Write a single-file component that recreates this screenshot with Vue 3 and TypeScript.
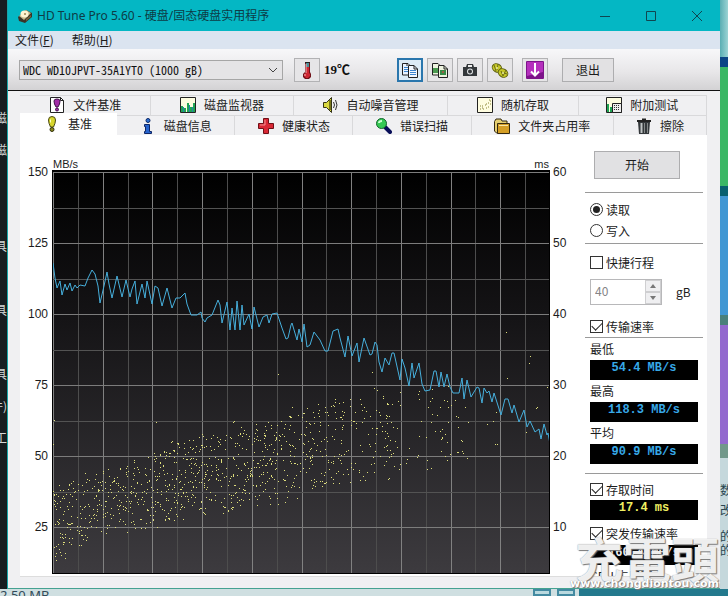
<script setup lang="ts">
import { ref } from 'vue'

type Point = [number, number]

interface Tab {
  label: string
  icon: string
}

const backTabs: Tab[] = [
  { label: '文件基准', icon: 'filebench' },
  { label: '磁盘监视器', icon: 'monitor' },
  { label: '自动噪音管理', icon: 'speaker' },
  { label: '随机存取', icon: 'random' },
  { label: '附加测试', icon: 'extra' },
]
const frontTabs: Tab[] = [
  { label: '基准', icon: 'bench' },
  { label: '磁盘信息', icon: 'info' },
  { label: '健康状态', icon: 'health' },
  { label: '错误扫描', icon: 'scan' },
  { label: '文件夹占用率', icon: 'folder' },
  { label: '擦除', icon: 'erase' },
]
const active = ref('基准')

const speedTicks = [150, 125, 100, 75, 50, 25]
const timeTicks = [60, 50, 40, 30, 20, 10]

const mode = ref('read')
const shortStroke = ref(false)
const showTransfer = ref(true)
const showAccess = ref(true)
const showBurst = ref(true)
const capacity = ref('40')

const speeds = [
  { label: '最低', value: '54.4 MB/s' },
  { label: '最高', value: '118.3 MB/s' },
  { label: '平均', value: '90.9 MB/s' },
]

// Transfer rate trace, in plot units (498 wide, 71 units per 25 MB/s).
const trace =
  '1,91 3,106 5,116 8,109 10,123 13,112 15,118 18,111 20,119 23,113 25,116 28,113 33,114 36,106 40,98 43,102 46,114 48,131 52,114 55,100 57,112 60,126 65,104 70,125 74,108 78,125 80,117 83,109 85,132 90,112 93,126 95,109 100,132 103,114 106,116 110,134 115,116 120,136 124,126 128,126 133,121 135,132 139,143 145,143 149,140 150,146 153,150 155,146 160,143 166,128 168,133 170,151 175,130 178,158 180,136 183,158 185,129 188,158 190,133 192,153 197,142 200,157 202,135 207,155 211,145 215,143 217,151 220,142 225,141 230,156 234,167 236,166 239,153 240,151 245,168 247,157 250,170 252,152 255,175 258,173 262,160 268,168 273,179 276,179 281,159 286,157 288,166 293,185 296,164 300,184 305,171 307,190 312,166 318,183 320,182 323,170 325,173 327,190 330,200 333,186 337,193 340,181 342,181 348,208 350,187 353,196 357,214 360,191 362,206 367,191 370,212 373,219 378,218 382,199 384,199 387,215 389,200 392,215 395,202 398,215 401,221 407,221 410,206 412,227 415,208 419,225 425,215 427,216 430,231 432,216 435,221 437,219 440,230 442,221 449,243 453,227 456,227 460,241 462,233 467,250 472,238 475,255 478,249 483,260 487,257 489,267 492,252 495,263 496,261 498,272'

// Upper and lower edge of the access time cloud.
const upper: Point[] = [[1, 308], [22, 300], [45, 294], [90, 280], [115, 266], [150, 258], [200, 250], [240, 234], [280, 220], [320, 210], [380, 214], [410, 220]]
const lower: Point[] = [[1, 399], [22, 380], [50, 368], [100, 360], [150, 348], [200, 342], [240, 332], [290, 318], [340, 304], [380, 294], [410, 288]]

function edge(points: Point[], x: number): number {
  for (let i = 1; i < points.length; i++) {
    const [x0, y0] = points[i - 1]
    const [x1, y1] = points[i]
    if (x <= x1) return y0 + ((y1 - y0) * (x - x0)) / (x1 - x0)
  }
  return points[points.length - 1][1]
}

const strays: Point[] = [
  [2, 248], [1, 272], [104, 250], [181, 250], [182, 249], [240, 235], [226, 202], [320, 200], [454, 160], [478, 184], [477, 191],
  [455, 206], [495, 215], [396, 214], [367, 219], [392, 228], [399, 233], [413, 235], [484, 236], [485, 235], [444, 240], [441, 249],
  [435, 252], [404, 244], [416, 250], [406, 255], [409, 268], [445, 272], [443, 272], [474, 260], [390, 265], [410, 269], [410, 279],
  [411, 281], [415, 286], [395, 288], [375, 297], [379, 296], [375, 288], [337, 306], [336, 307], [313, 308], [290, 247], [178, 265],
]

function cloud(): string {
  let seed = 20177
  const next = () => {
    seed = (seed * 16807) % 2147483647
    return seed / 2147483647
  }
  const dots: Point[] = [...strays]
  while (dots.length < 1080) {
    const x = 1 + Math.floor(next() * 408)
    const weight = x < 225 ? 1 : x < 290 ? 0.75 : x < 345 ? 0.42 : 0.18
    const centred = (next() + next()) / 2
    const even = next()
    if (next() > weight) continue
    const top = edge(upper, x)
    const bottom = edge(lower, x)
    dots.push([x, Math.round(top + (bottom - top) * (centred * 0.15 + even * 0.85))])
  }
  return dots.map(([x, y]) => `M${x},${y}h1v1h-1z`).join('')
}
const dots = cloud()

const columns = Array.from({ length: 21 }, (_, i) => ({ at: Math.round(i * 24.85) + 1, major: i % 2 === 0 }))
const rows = Array.from({ length: 11 }, (_, i) => ({ at: Math.round(i * 35.5), major: i % 2 === 0 }))

const leftDesk = ['磁', '磁', '', '', '具', '', '具', '', '具', '件)', '工']
</script>

<template>
  <div class="desktop">
    <aside class="desk-left">
      <span v-for="(t, i) in leftDesk" :key="i">{{ t }}</span>
    </aside>

    <main class="window">
      <header class="titlebar">
        <svg class="app-icon" viewBox="0 0 16 16" width="16" height="16">
          <path d="M1 9 9 2l6 3v4l-7 6-6-2z" fill="#3b3427" />
          <path d="M2 8 9 2l5 3-7 7z" fill="#c8b98b" />
          <ellipse cx="7.500" cy="6" rx="4" ry="3.500" fill="#fff4d2" />
          <circle cx="8" cy="6" r="1" fill="#9a8452" />
          <path d="m9 11 5-4v2l-5 4z" fill="#78633d" />
        </svg>
        <h1>HD Tune Pro 5.60 - 硬盘/固态硬盘实用程序</h1>
        <div class="caption">
          <button type="button" aria-label="最小化"><svg viewBox="0 0 12 12" width="12" height="12"><path d="M1 6.500h10" /></svg></button>
          <button type="button" aria-label="最大化"><svg viewBox="0 0 12 12" width="12" height="12"><path d="M1.500 1.500h9v9h-9z" /></svg></button>
          <button type="button" aria-label="关闭"><svg viewBox="0 0 12 12" width="12" height="12"><path d="m1 1 10 10M11 1 1 11" /></svg></button>
        </div>
      </header>

      <nav class="menu">
        <button type="button">文件(<u>F</u>)</button>
        <button type="button">帮助(<u>H</u>)</button>
      </nav>

      <section class="toolbar">
        <div class="drive">
          <select aria-label="硬盘">
            <option>WDC WD10JPVT-35A1YT0 (1000 gB)</option>
          </select>
          <svg viewBox="0 0 10 6" width="10" height="6"><path d="m1 1 4 4 4-4" fill="none" stroke="#444" /></svg>
        </div>
        <button type="button" class="tool" aria-label="温度">
          <svg viewBox="0 0 16 18" width="16" height="18">
            <path d="M6 2h5v9l1 2v3l-2 2H6l-2-2v-3l2-2z" fill="#701018" />
            <path d="M7 2h3v5H7z" fill="#4b8f98" />
            <path d="M7 6h3v6l1 1v2l-2 2H7l-2-2v-2l2-1z" fill="#cf2733" />
            <path d="M7 3v9M6 13v2" stroke="#f3b5b5" />
            <path d="M6 1.500h5" stroke="#222" />
          </svg>
        </button>
        <output class="temp">19℃</output>
        <div class="tools">
          <button type="button" class="tool focused" aria-label="复制文本">
            <svg viewBox="0 0 16 16" width="16" height="16">
              <path d="M.5 1.500H6L8.500 4v9H.5z" fill="#e8f3ff" stroke="#222" />
              <path d="M6.500 3.500H12L15.500 7v8.500h-9z" fill="#f2f8ff" stroke="#222" />
              <path d="M12 3.500V7h3.500M5 1.500V4" fill="none" stroke="#222" />
              <path d="M2 5.500h4M2 7.500h4M2 9.500h4M8 8.500h6M8 10.500h6M8 12.500h6" stroke="#3d86cf" />
            </svg>
          </button>
          <button type="button" class="tool" aria-label="复制图像">
            <svg viewBox="0 0 16 16" width="16" height="16">
              <path d="M.5 1.500H6L8.500 4v9H.5z" fill="#edf3df" stroke="#222" />
              <path d="M1 6h5v5H1z" fill="#4b9950" />
              <path d="M6.500 3.500H12L15.500 7v8.500h-9z" fill="#edf3df" stroke="#222" />
              <path d="M12 3.500V7h3.500" fill="none" stroke="#222" />
              <path d="M8 8h6v5H8z" fill="#388a46" /><path d="M10 9h2v2h-2z" fill="#9c5f45" />
            </svg>
          </button>
          <button type="button" class="tool" aria-label="截图">
            <svg viewBox="0 0 16 16" width="16" height="16">
              <path d="M1 5h3l1-3h6l1 3h3v9H1z" fill="#34383b" />
              <path d="M6 4h4" stroke="#eee" stroke-width="2" /><circle cx="8" cy="9.500" r="3" fill="#e3e6e8" /><circle cx="8" cy="9.500" r="2" fill="#34383b" />
            </svg>
          </button>
          <button type="button" class="tool" aria-label="选项">
            <svg viewBox="0 0 18 16" width="18" height="16">
              <g fill="#c6c828" stroke="#626315"><ellipse cx="6" cy="6" rx="5" ry="4" transform="rotate(30 6 6)" /><ellipse cx="12" cy="11" rx="5" ry="4" transform="rotate(30 12 11)" /></g>
              <path d="m3 3 2 6M7 2 6 8m5-3-4 4m3 0 2 5m3-6-3 6m4-2-6-2" stroke="#6f7018" fill="none" />
              <circle cx="6" cy="6" r="1" fill="#eff0a0" /><circle cx="12" cy="11" r="1" fill="#eff0a0" />
            </svg>
          </button>
          <button type="button" class="tool save" aria-label="保存">
            <svg viewBox="0 0 18 18" width="18" height="18">
              <rect width="18" height="18" rx="1" fill="#7d138a" /><path d="M1 1h16v10L1 15z" fill="#b530bd" />
              <path d="M9 2v12M5 10.500l4 4 4-4" fill="none" stroke="#fff" stroke-width="2" />
            </svg>
          </button>
          <button type="button" class="exit">退出</button>
        </div>
      </section>

      <div class="tabs">
        <div v-for="(row, r) in [backTabs, frontTabs]" :key="r" class="tab-row" :class="r ? 'front' : 'back'" role="tablist">
          <button
            v-for="tab in row" :key="tab.label" type="button" role="tab" class="tab"
            :class="{ active: tab.label === active }" :aria-selected="tab.label === active" @click="active = tab.label"
          >
            <svg viewBox="0 0 16 16" width="16" height="16">
              <g v-if="tab.icon === 'filebench'">
                <path d="M1.500.5h10l3 3v12h-13z" fill="#fff" stroke="#222" /><path d="M11.500.5v3h3" fill="none" stroke="#222" />
                <path d="M5 4q0-2 3-2t3 2q0 3-2 6H7Q5 7 5 4z" fill="#a32ba8" stroke="#40114a" /><circle cx="8" cy="12.500" r="1.500" fill="#a32ba8" stroke="#40114a" />
              </g>
              <g v-else-if="tab.icon === 'monitor'">
                <path d="M.5.5h15v15H.5z" fill="#fdfde0" stroke="#222" />
                <path d="M1 9h2v6H1zm3 2h2v4H4zm3-5h2v9H7zm3 4h2v5h-2zm3-4h2v9h-2z" fill="#20a454" />
                <path d="M3.500 10v5M9.500 8v7m3-5v5" stroke="#2386a8" />
              </g>
              <g v-else-if="tab.icon === 'speaker'">
                <path d="M.5 5.500h3l5-5v15l-5-5h-3z" fill="#d9d83f" stroke="#333314" /><path d="M7 3v10" stroke="#77751b" stroke-width="2" />
                <path d="m10.500 5 1 3-1 3m2-8 1.500 5-1.500 5" fill="none" stroke="#333" />
              </g>
              <g v-else-if="tab.icon === 'random'">
                <path d="M.5.5h15v15H.5z" fill="#fffde0" stroke="#222" />
                <path d="M3 12h1m1-3h1m0 3h1m1-4h1m0 3h1m1-5h1m-1 4h1m1-6h1m-2-1h1m-8 8h1m-3-2h1m9-2h1M9 7h1" stroke="#888434" />
              </g>
              <g v-else-if="tab.icon === 'extra'">
                <path d="M.5.5h15v15H.5z" fill="#fdfde0" stroke="#222" /><path d="M1 7h2v8H1zm3 3h2v5H4z" fill="#20a454" />
                <path d="M6.500 6.500h9v9h-9z" fill="#eee" stroke="#222" /><path d="M8 8.500h6M8 10.500h6M8 12.500h6" stroke="#333" stroke-dasharray="1 1" />
              </g>
              <g v-else-if="tab.icon === 'bench'">
                <path d="M4.500 4q0-3.500 3.500-3.500T11.500 4q0 3-2 7h-3q-2-4-2-7z" fill="#d8d62d" stroke="#4a4912" />
                <ellipse cx="8" cy="13.500" rx="2" ry="2" fill="#88861f" stroke="#33320d" /><path d="M6.500 3.500v3" stroke="#ffffc4" />
              </g>
              <g v-else-if="tab.icon === 'info'">
                <circle cx="8" cy="2.500" r="2" fill="#2a72d5" stroke="#0e2766" />
                <path d="M4.500 6.500h5v7h2v2h-7v-2h1v-5h-1z" fill="#2764ce" stroke="#0e2766" />
              </g>
              <g v-else-if="tab.icon === 'health'">
                <path d="M5.500.5h5v5h5v5h-5v5h-5v-5h-5v-5h5z" fill="#d92835" stroke="#6f1017" /><path d="M7 2v5H2" fill="none" stroke="#f49296" />
              </g>
              <g v-else-if="tab.icon === 'scan'">
                <path d="m9 9 5 5" stroke="#080d58" stroke-width="4" stroke-linecap="round" /><circle cx="5.500" cy="5.500" r="5" fill="#35c954" stroke="#14642c" />
                <path d="M3 5q0-2 3-2" fill="none" stroke="#ccffd1" stroke-width="2" />
              </g>
              <g v-else-if="tab.icon === 'folder'">
                <path d="M.5 3.500 2 1h5l1 2h5v12H2.500L.5 13z" fill="#e5cf70" stroke="#332810" />
                <path d="M3.500 5.500h12v10h-12z" fill="#d49e25" stroke="#332810" /><path d="M5 7.500h9" stroke="#f8e5a5" />
              </g>
              <g v-else>
                <path d="M2 4h12l-1 12H3z" fill="#34383b" /><path d="M1 3h14M6 1.500h4" stroke="#222" stroke-width="2" />
                <path d="M5.500 5v10" stroke="#c0c4c5" stroke-width="2" /><path d="M8.500 5v10m3-10v10" stroke="#858989" />
              </g>
            </svg>
            {{ tab.label }}
          </button>
        </div>
      </div>

      <section class="page">
        <div class="axis speed"><span v-for="t in speedTicks" :key="t">{{ t }}</span></div>
        <div class="chart">
          <div class="units"><span>MB/s</span><span>ms</span></div>
          <svg class="plot" viewBox="0 0 498 402" preserveAspectRatio="none">
            <defs>
              <linearGradient id="night" x1="0" y1="0" x2="0" y2="1">
                <stop offset="0" stop-color="#000" /><stop offset="0.35" stop-color="#141315" /><stop offset="1" stop-color="#3d3b3f" />
              </linearGradient>
            </defs>
            <rect width="498" height="402" fill="url(#night)" />
            <g shape-rendering="crispEdges">
              <rect v-for="c in columns" :key="'c' + c.at" :x="c.at" y="0" width="1" height="402" :fill="c.major ? '#818181' : '#4d4d4d'" />
              <rect v-for="r in rows" :key="'r' + r.at" x="0" :y="r.at" width="498" height="1" :fill="r.major ? '#7c7c7c' : '#535353'" />
              <path :d="dots" fill="#dede7c" />
            </g>
            <polyline :points="trace" fill="none" stroke="#46afdc" stroke-width="1" vector-effect="non-scaling-stroke" />
          </svg>
        </div>
        <div class="axis time"><span v-for="t in timeTicks" :key="t">{{ t }}</span></div>

        <form class="side" @submit.prevent>
          <button type="submit" class="start">开始</button>
          <fieldset>
            <label><input v-model="mode" type="radio" name="mode" value="read">读取</label>
            <label><input v-model="mode" type="radio" name="mode" value="write">写入</label>
          </fieldset>
          <label class="stroke"><input v-model="shortStroke" type="checkbox">快捷行程</label>
          <div class="amount">
            <div class="spin">
              <input id="capacity" v-model="capacity" type="text" disabled>
              <div class="arrows">
                <button type="button" aria-label="增加" disabled><svg viewBox="0 0 6 4" width="6" height="4"><path d="M0 4h6L3 0z" /></svg></button>
                <button type="button" aria-label="减少" disabled><svg viewBox="0 0 6 4" width="6" height="4"><path d="M0 0h6L3 4z" /></svg></button>
              </div>
            </div>
            <label for="capacity">gB</label>
          </div>
          <label class="transfer"><input v-model="showTransfer" type="checkbox">传输速率</label>
          <div class="results">
            <template v-for="s in speeds" :key="s.label">
              <span class="name">{{ s.label }}</span>
              <output class="lcd">{{ s.value }}</output>
            </template>
          </div>
          <div class="latency">
            <label><input v-model="showAccess" type="checkbox">存取时间</label>
            <output class="lcd yellow">17.4 ms</output>
            <label class="burst"><input v-model="showBurst" type="checkbox">突发传输速率</label>
            <output class="lcd white">160.4 MB/s</output>
            <span class="name">CPU 占用率</span>
          </div>
        </form>
      </section>
    </main>

    <aside class="desk-right">
      <i class="sky" /><i class="navy" /><i class="green" /><i class="sea" /><i class="blue" /><i class="moss" /><i class="violet" /><i class="olive" />
      <div class="notes"><span>数</span><span>改</span><span class="low">的</span><span>的</span></div>
    </aside>

    <footer class="desk-bottom">
      <span class="size">2.50 MB</span>
      <span class="views"><i /><i /></span>
      <span class="sea-end" />
    </footer>

    <div class="watermark"><strong>充電頭</strong><span>www.chongdiontou.com</span></div>
  </div>
</template>

<style>
body {
  margin: 0;
  overflow: hidden;
}
</style>

<style scoped>
* {
  box-sizing: border-box;
}
.desktop {
  position: relative;
  display: grid;
  grid-template-columns: 7px 1fr 8px;
  grid-template-rows: 1fr 7px;
  height: 100vh;
  overflow: hidden;
  background: #171d20;
  color: #1c1c1c;
  font: 12px/16px "Noto Sans CJK SC", sans-serif;
}
button,
input,
select {
  margin: 0;
  padding: 0;
  color: inherit;
  font: inherit;
}
svg {
  display: block;
  flex: none;
}
.desk-left {
  display: flex;
  flex-direction: column;
  padding-top: 102px;
  overflow: hidden;
  color: #d5d8d8;
}
.desk-left span {
  display: flex;
  flex: 0 0 32px;
  align-items: center;
  justify-content: flex-end;
}
.window {
  display: flex;
  flex-direction: column;
  min-width: 0;
  min-height: 0;
  border-bottom: 1px solid #45a291;
  border-left: 1px solid #18a5a8;
  background: #f0f0f2;
}
.titlebar {
  display: flex;
  flex: 0 0 31px;
  align-items: center;
  padding-left: 9px;
  background: #04b7c4;
}
h1 {
  flex: 1;
  margin: 0 0 0 4px;
  color: #0d3c46;
  font: 12px/16px "Noto Sans", "Noto Sans CJK SC", sans-serif;
}
.caption {
  display: flex;
}
.caption button {
  display: grid;
  width: 46px;
  height: 31px;
  place-items: center;
  border: 0;
  background: none;
}
.caption path {
  fill: none;
  stroke: #104650;
}
.menu {
  display: flex;
  flex: 0 0 18px;
  gap: 18px;
  padding-left: 7px;
  background: #dbe4f0;
}
.menu button {
  border: 0;
  background: none;
  line-height: 18px;
}
.toolbar {
  display: flex;
  flex: 0 0 42px;
  align-items: center;
  padding-left: 11px;
  border-bottom: 1px solid #111;
  background: linear-gradient(#f7f7f9, #e8e7e9 55%, #d3d2d4);
}
.drive {
  display: flex;
  flex: 0 0 264px;
  align-items: center;
  height: 20px;
  margin-right: 11px;
  padding-right: 4px;
  border: 1px solid #a6a6a6;
  background: #e5e4e6;
}
.drive select {
  flex: 1;
  min-width: 0;
  padding-left: 3px;
  border: 0;
  appearance: none;
  background: none;
  color: #111;
  font-feature-settings: "hwid";
  line-height: 18px;
}
.tool {
  display: grid;
  flex: none;
  width: 26px;
  height: 24px;
  place-items: center;
  border: 1px solid #b2b2b4;
  background: #e6e5e7;
}
.focused {
  border: 2px solid #2a76ad;
  background: #dcebf5;
}
.temp {
  width: 77px;
  padding-left: 4px;
  color: #111;
  font: bold 13px/16px "Liberation Serif", "Noto Sans CJK SC", serif;
}
.tools {
  display: flex;
  gap: 4px;
}
.save {
  margin-left: 5px;
}
.exit {
  width: 52px;
  height: 24px;
  margin-left: 10px;
  border: 1px solid #adadaf;
  background: #e2e1e3;
}
.tabs {
  flex: none;
  padding: 4px 13px 0 12px;
}
.tab-row {
  display: grid;
  height: 20px;
}
.back {
  grid-template-columns: 131fr 142fr 154fr 130fr 128fr;
}
.front {
  grid-template-columns: 97fr 118fr 118fr 118fr 142fr 93fr;
}
.tab {
  display: flex;
  align-items: center;
  justify-content: center;
  gap: 8px;
  border: 0;
  border-top: 1px solid #d9d9db;
  border-right: 1px solid #d9d9db;
  background: #f0f0f2;
}
.back .tab {
  padding-bottom: 2px;
}
.tab.active {
  margin-top: -2px;
  padding-bottom: 2px;
  border-color: #fff;
  background: #fff;
}
.page {
  display: grid;
  flex: 1;
  grid-template-columns: 32px 1fr 35px 118px;
  min-height: 0;
  margin: 0 13px 11px 12px;
  padding-right: 4px;
  overflow: hidden;
  border-bottom: 1px solid #ddd;
  background: #fff;
}
.axis {
  display: flex;
  flex-direction: column;
  padding-top: 2px;
  font: 12px/71px "Liberation Sans", sans-serif;
}
.axis span {
  height: 71px;
}
.speed {
  padding-right: 4px;
  text-align: right;
}
.time {
  padding-left: 3px;
}
.units {
  display: flex;
  align-items: flex-end;
  justify-content: space-between;
  height: 35px;
  padding: 0 1px;
  font: 11px/11px "Liberation Sans", sans-serif;
}
.plot {
  width: 100%;
  height: 404px;
  border-top: 2px solid #000;
  outline: 1px solid #000;
  outline-offset: -1px;
}
.side {
  display: flex;
  flex-direction: column;
  padding-top: 16px;
}
.start {
  align-self: flex-start;
  flex: none;
  width: 86px;
  height: 28px;
  margin-left: 9px;
  border: 1px solid #adadaf;
  background: #e1e1e3;
}
fieldset {
  display: block;
  min-width: 0;
  margin: 13px 0 0;
  padding: 6px 0 2px;
  border: 0;
  border-top: 1px solid #9a9a9a;
  border-bottom: 1px solid #9a9a9a;
}
.side label {
  display: flex;
  flex: none;
  align-items: center;
  height: 21px;
  padding-left: 5px;
}
input[type="radio"],
input[type="checkbox"] {
  display: grid;
  flex: none;
  width: 13px;
  height: 13px;
  margin-right: 3px;
  place-items: center;
  border: 1px solid #333;
  appearance: none;
  background: #fff;
}
input[type="radio"] {
  border-radius: 50%;
}
input[type="radio"]:checked::before {
  width: 7px;
  height: 7px;
  border-radius: 50%;
  background: #222;
  content: "";
}
input[type="checkbox"]:checked::before {
  width: 9px;
  height: 5px;
  margin-bottom: 3px;
  border-bottom: 1px solid #222;
  border-left: 1px solid #222;
  content: "";
  transform: rotate(-45deg);
}
.side .stroke {
  margin-top: 8px;
}
.amount {
  display: flex;
  flex: none;
  align-items: center;
  margin: 6px 0 11px 5px;
}
.spin {
  display: flex;
  width: 72px;
  height: 26px;
  border: 1px solid #b8b8ba;
}
.spin input {
  flex: 1;
  min-width: 0;
  padding: 0 0 2px 4px;
  border: 0;
  background: #fff;
  color: #858587;
}
.arrows {
  display: grid;
  width: 16px;
}
.arrows button {
  display: grid;
  place-items: center;
  border: 1px solid #cfcfd1;
  background: #efeff1;
}
.arrows path {
  fill: #777;
}
.side .amount label {
  padding-left: 14px;
}
.results,
.latency {
  display: flex;
  flex: none;
  flex-direction: column;
  border-top: 1px solid #9a9a9a;
}
.latency {
  margin-top: 9px;
  padding-top: 5px;
}
.name {
  flex: none;
  height: 22px;
  padding-left: 5px;
  line-height: 22px;
}
.lcd {
  height: 20px;
  margin: 0 5px;
  background: #000;
  color: #37a9e8;
  font: bold 12px/16px "Liberation Mono", monospace;
  text-align: center;
}
.yellow {
  color: #efef62;
}
.white {
  color: #f2f2f2;
}
.side .burst {
  margin: 3px 0 1px;
}
.desk-right {
  display: flex;
  flex-direction: column;
  overflow: hidden;
  background: #c5d8dc;
}
.desk-right i {
  flex: none;
}
.sky {
  height: 57px;
  background: linear-gradient(90deg, #59aeb3, #9bd3d4);
}
.navy {
  height: 10px;
  background: #0b4585;
}
.green {
  height: 119px;
  background: #3ab765;
}
.sea {
  height: 10px;
  background: #08606f;
}
.blue {
  height: 119px;
  background: #4197d3;
}
.moss {
  height: 10px;
  background: #4a807b;
}
.violet {
  height: 119px;
  background: #9269ce;
}
.olive {
  height: 14px;
  background: #71988a;
}
.notes {
  display: flex;
  flex-direction: column;
  padding-top: 24px;
  color: #284650;
}
.notes span {
  height: 20px;
}
.notes .low {
  height: 14px;
  margin-top: 6px;
}
.desk-bottom {
  display: flex;
  grid-column: 1 / -1;
  height: 7px;
  overflow: hidden;
  background: #cfdfe1;
}
.size {
  flex: 1;
  color: #314a58;
  font: 13px/13px "Noto Sans", sans-serif;
}
.views {
  display: flex;
  gap: 6px;
  width: 46px;
}
.views i {
  width: 18px;
  border: 2px solid #438aa1;
  background: #b9d9df;
}
.sea-end {
  width: 149px;
  background: #23798d;
}
.watermark {
  position: absolute;
  right: 9px;
  bottom: 6px;
  display: flex;
  flex-direction: column;
  align-items: flex-end;
  color: rgb(255 255 255 / 88%);
  pointer-events: none;
  text-shadow: 1px 1px 1px #777, 0 0 1px #888;
}
.watermark strong {
  font-size: 48px;
  font-weight: 700;
  line-height: 42px;
}
.watermark span {
  color: #fff;
  font: bold 11px/12px "DejaVu Sans", sans-serif;
}
</style>
